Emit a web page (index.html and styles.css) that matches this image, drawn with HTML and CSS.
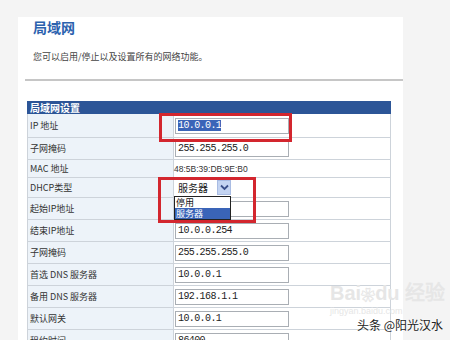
FILE: index.html
```html
<!DOCTYPE html>
<html lang="zh-CN">
<head>
  <meta charset="UTF-8" />
  <title>局域网</title>
  <link rel="stylesheet" href="styles.css">
</head>
<body>
  <div class="panel">
    <div class="title">局域网</div>
    <div class="desc">您可以启用/停止以及设置所有的网络功能。</div>
    <div class="rule"></div>

    <table class="lan">
      <tr class="head"><td colspan="2">局域网设置</td></tr>
      <tr class="tall">
        <td class="label">IP 地址</td>
        <td><div class="field"><span class="sel">10.0.0.1</span></div></td>
      </tr>
      <tr>
        <td class="label">子网掩码</td>
        <td><div class="field">255.255.255.0</div></td>
      </tr>
      <tr class="short">
        <td class="label">MAC 地址</td>
        <td class="mac">48:5B:39:DB:9E:B0</td>
      </tr>
      <tr class="mid">
        <td class="label">DHCP类型</td>
        <td>
          <div class="select">
            <span class="sel-text">服务器</span>
            <span class="arrow">
              <svg width="9" height="7" viewBox="0 0 9 7"><path d="M1 1.5 L4.5 5 L8 1.5" fill="none" stroke="#3a4f8a" stroke-width="1.8"/></svg>
            </span>
          </div>
        </td>
      </tr>
      <tr>
        <td class="label">起始IP地址</td>
        <td><div class="field"></div></td>
      </tr>
      <tr>
        <td class="label">结束IP地址</td>
        <td><div class="field">10.0.0.254</div></td>
      </tr>
      <tr>
        <td class="label">子网掩码</td>
        <td><div class="field">255.255.255.0</div></td>
      </tr>
      <tr>
        <td class="label">首选 DNS 服务器</td>
        <td><div class="field">10.0.0.1</div></td>
      </tr>
      <tr>
        <td class="label">备用 DNS 服务器</td>
        <td><div class="field">192.168.1.1</div></td>
      </tr>
      <tr>
        <td class="label">默认网关</td>
        <td><div class="field">10.0.0.1</div></td>
      </tr>
      <tr>
        <td class="label">租约时间</td>
        <td><div class="field">86400</div></td>
      </tr>
    </table>
  </div>

  <div class="dropdown">
    <div class="opt">停用</div>
    <div class="opt active">服务器</div>
  </div>

  <div class="mark mark-ip"></div>
  <div class="mark mark-dhcp"></div>

  <div class="watermark">
    <div class="wm-logo">Bai<span class="paw">❀</span>du 经验</div>
    <div class="wm-url">jingyan.baidu.com</div>
  </div>
  <div class="credit">头条 @阳光汉水</div>
</body>
</html>
```

FILE: styles.css
```css
body {
  margin: 0;
  background-color: #f4f4f4;
  font-family: "Noto Sans CJK SC", "Liberation Sans", sans-serif;
  color: #333;
  overflow: hidden;
}

.panel {
  margin: 17px 0 0 18px;
  width: 385px;
  height: 340px;
  background-color: #fff;
}

.title {
  margin-left: 15px;
  font-size: 14px;
  font-weight: bold;
  line-height: 20px;
  color: #2b62ae;
}

.desc {
  margin: 13px 0 0 15px;
  font-size: 9px;
  line-height: 14px;
  color: #444;
}

.rule {
  margin: 15px 0 0 7px;
  height: 2px;
  background-color: #c6c6c6;
}

.lan {
  margin: 20px 0 0 9px;
  width: 364px;
  border-collapse: collapse;
  font-size: 9px;
}

.lan td {
  border: 1px solid #cdd3da;
  padding: 0;
  height: 21px;
  vertical-align: middle;
}

.lan .head td {
  height: 11px;
  background-color: #2c5597;
  border-color: #2c5597;
  color: #fff;
  font-weight: bold;
  font-size: 10px;
  line-height: 11px;
  padding-left: 2px;
}

.lan .tall td { height: 23px; }
.lan .short td { height: 17px; }
.lan .mid td { height: 19px; }

.lan .label {
  width: 143px;
  padding-left: 2px;
  background-color: #edf3f9;
  color: #333;
}

.field {
  margin-left: 1px;
  width: 110px;
  height: 14px;
  border: 1px solid #a9aeb4;
  font-family: "Liberation Mono", monospace;
  font-size: 10px;
  letter-spacing: -0.6px;
  line-height: 14px;
  color: #222;
  padding-left: 2px;
  white-space: nowrap;
  overflow: hidden;
}

.sel {
  background-color: #3a64b8;
  color: #fff;
}

.mac {
  padding-left: 3px;
  font-family: "Liberation Sans", sans-serif;
  font-size: 8.5px;
  color: #333;
}

.select {
  margin-left: 1px;
  width: 56px;
  height: 16px;
  display: flex;
  align-items: center;
  justify-content: space-between;
}

.sel-text {
  font-size: 10px;
  color: #222;
  padding-left: 3px;
}

.arrow {
  width: 12px;
  height: 13px;
  background-color: #c4d4f2;
  border: 1px solid #a9bce3;
  display: flex;
  align-items: center;
  justify-content: center;
}

.dropdown {
  position: absolute;
  left: 174px;
  top: 196px;
  width: 55px;
  border: 1px solid #222;
  background-color: #fff;
  font-size: 9px;
}

.opt {
  line-height: 11px;
  height: 11px;
  padding-left: 1px;
  color: #111;
  overflow: hidden;
}

.opt.active {
  background-color: #3a64b8;
  color: #fff;
}

.mark {
  position: absolute;
  border: 3px solid #d3262e;
  box-sizing: border-box;
}

.mark-ip {
  left: 159px;
  top: 113px;
  width: 133px;
  height: 29px;
}

.mark-dhcp {
  left: 158px;
  top: 177px;
  width: 98px;
  height: 46px;
}

.watermark {
  position: absolute;
  left: 330px;
  top: 282px;
  color: #e6e6e6;
  font-family: "Liberation Sans", sans-serif;
}

.wm-logo {
  font-size: 20px;
  font-weight: bold;
  line-height: 22px;
}

.paw {
  font-size: 14px;
}

.wm-url {
  font-size: 9px;
  line-height: 10px;
}

.credit {
  position: absolute;
  left: 357px;
  top: 316px;
  font-size: 12px;
  color: #222;
  text-shadow: 0 0 2px #fff;
}
```
